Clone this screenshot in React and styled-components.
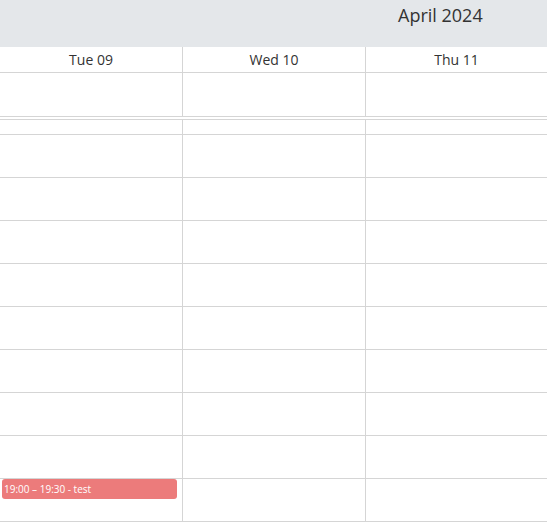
import styled, { createGlobalStyle } from "styled-components";

const GlobalStyle = createGlobalStyle`
  html, body {
    margin: 0;
    padding: 0;
    background: #fff;
  }
  body {
    font-family: "Open Sans", "Noto Sans", sans-serif;
    color: #333;
    overflow: hidden;
  }
`;

const LINE = "#d5d5d5";

const Calendar = styled.div`
  width: 547px;
  display: flex;
  flex-direction: column;
`;

const Toolbar = styled.div`
  height: 47px;
  background: #e4e7ea;
  display: flex;
  align-items: flex-start;
  padding-left: 398px;
  box-sizing: border-box;
`;

const Title = styled.h2`
  margin: 3px 0 0;
  font-size: 18px;
  font-weight: 400;
  line-height: 24px;
  color: #333;
`;

const Row = styled.div`
  display: grid;
  grid-template-columns: 183px 183px 1fr;
  border-bottom: 1px solid ${LINE};
`;

const HeadCell = styled.div`
  height: 25px;
  display: flex;
  align-items: center;
  justify-content: center;
  font-size: 14px;
  color: #333;
  border-right: ${({ $last }) => ($last ? "none" : `1px solid ${LINE}`)};
`;

const AllDayCell = styled.div`
  height: 43px;
  border-right: ${({ $last }) => ($last ? "none" : `1px solid ${LINE}`)};
`;

const Divider = styled.div`
  height: 2px;
  border-bottom: 1px solid ${LINE};
`;

const Body = styled.div`
  display: grid;
  grid-template-columns: 183px 183px 1fr;
`;

const Column = styled.div`
  display: flex;
  flex-direction: column;
  border-right: ${({ $last }) => ($last ? "none" : `1px solid ${LINE}`)};
`;

const Slot = styled.div`
  height: ${({ $h }) => $h}px;
  border-bottom: 1px solid ${LINE};
  padding: 0 5px 0 2px;
`;

const Event = styled.div`
  height: 20px;
  background: #ec7b7b;
  border-radius: 3px;
  color: #fff;
  font-size: 10px;
  line-height: 20px;
  padding-left: 2px;
  white-space: nowrap;
  overflow: hidden;
`;

const days = ["Tue 09", "Wed 10", "Thu 11"];
const slots = [14, 42, 42, 42, 42, 42, 42, 42, 42, 42];

export default function App() {
  return (
    <Calendar>
      <GlobalStyle />
      <Toolbar>
        <Title>April 2024</Title>
      </Toolbar>
      <Row>
        {days.map((d, i) => (
          <HeadCell key={d} $last={i === days.length - 1}>
            {d}
          </HeadCell>
        ))}
      </Row>
      <Row>
        {days.map((d, i) => (
          <AllDayCell key={d} $last={i === days.length - 1} />
        ))}
      </Row>
      <Divider />
      <Body>
        {days.map((d, ci) => (
          <Column key={d} $last={ci === days.length - 1}>
            {slots.map((h, si) => (
              <Slot key={si} $h={h}>
                {ci === 0 && si === slots.length - 1 && (
                  <Event>19:00 – 19:30 - test</Event>
                )}
              </Slot>
            ))}
          </Column>
        ))}
      </Body>
    </Calendar>
  );
}
